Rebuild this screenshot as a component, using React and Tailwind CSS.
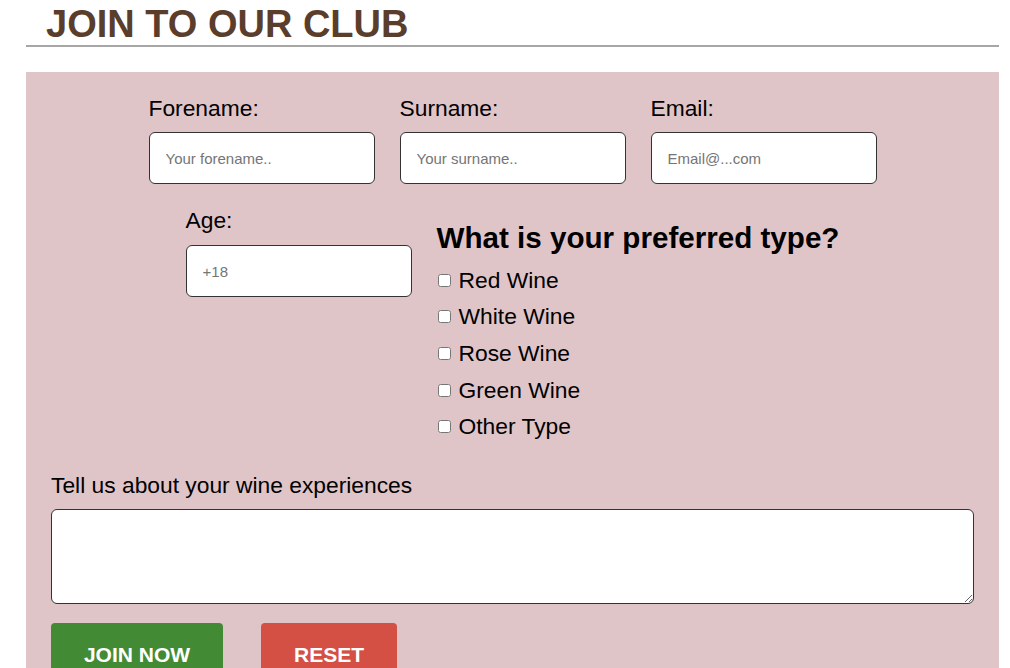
import React from "react";

const font = { fontFamily: '"Liberation Sans", Arial, sans-serif' };

const wines = ["Red Wine", "White Wine", "Rose Wine", "Green Wine", "Other Type"];

const Field = ({ label, placeholder, type = "text" }) => (
    <div className="flex flex-col w-[226px]">
        <label className="text-[22.8px] leading-[25px] text-black">{label}</label>
        <input
            type={type}
            placeholder={placeholder}
            className="mt-[11px] h-[52px] w-[226px] rounded-[6px] border border-[#333] bg-white pl-[16px] text-[15px] text-black placeholder:text-[#757575] outline-none"
        />
    </div>
);

export default function App() {
    return (
        <div className="bg-white min-h-screen" style={font}>
            <div className="ml-[26px] w-[973px]">
                {/* Title */}
                <h1 className="pt-[3px] pl-[20px] text-[38px] leading-[42px] font-bold text-[#5a3d2b] border-b-2 border-[#a6a6a6]">
                    JOIN TO OUR CLUB
                </h1>

                {/* Form panel */}
                <form className="mt-[25px] bg-[#e0c5c8] px-[25px] pt-[24px] pb-[40px]">
                    <div className="flex justify-center gap-[25px]">
                        <Field label="Forename:" placeholder="Your forename.." />
                        <Field label="Surname:" placeholder="Your surname.." />
                        <Field label="Email:" placeholder="Email@...com" type="email" />
                    </div>

                    <div className="mt-[24px] flex justify-center gap-[25px]">
                        <div className="flex flex-col w-[226px]">
                            <label className="text-[22.8px] leading-[25px] text-black">Age:</label>
                            <input
                                type="number"
                                placeholder="+18"
                                className="mt-[12px] h-[52px] w-[226px] rounded-[6px] border border-[#333] bg-white pl-[16px] text-[15px] text-black placeholder:text-[#757575] outline-none"
                            />
                        </div>
                        <div className="pt-[14px]">
                            <h3 className="text-[29.6px] leading-[32px] font-bold text-black mb-[8px]">
                                What is your preferred type?
                            </h3>
                            {wines.map((w) => (
                                <label key={w} className="flex items-center h-[36.6px] text-[22.8px] leading-[25px] text-black">
                                    <input type="checkbox" className="ml-[1px] mr-[8px] w-[13px] h-[13px]" />
                                    {w}
                                </label>
                            ))}
                        </div>
                    </div>

                    <label className="block mt-[28px] text-[22.8px] leading-[25px] text-black">
                        Tell us about your wine experiences
                    </label>
                    <textarea className="mt-[11px] block h-[95px] w-full rounded-[6px] border border-[#333] bg-white p-2 text-[15px] outline-none" />

                    <div className="mt-[19px] flex gap-[38px]">
                        <button type="submit" className="w-[172px] rounded-[4px] bg-[#438a35] text-white font-bold text-[21px] leading-[24px] py-[20px]">
                            JOIN NOW
                        </button>
                        <button type="reset" className="w-[136px] rounded-[4px] bg-[#d44f44] text-white font-bold text-[21px] leading-[24px] py-[20px]">
                            RESET
                        </button>
                    </div>
                </form>
            </div>
        </div>
    );
}
